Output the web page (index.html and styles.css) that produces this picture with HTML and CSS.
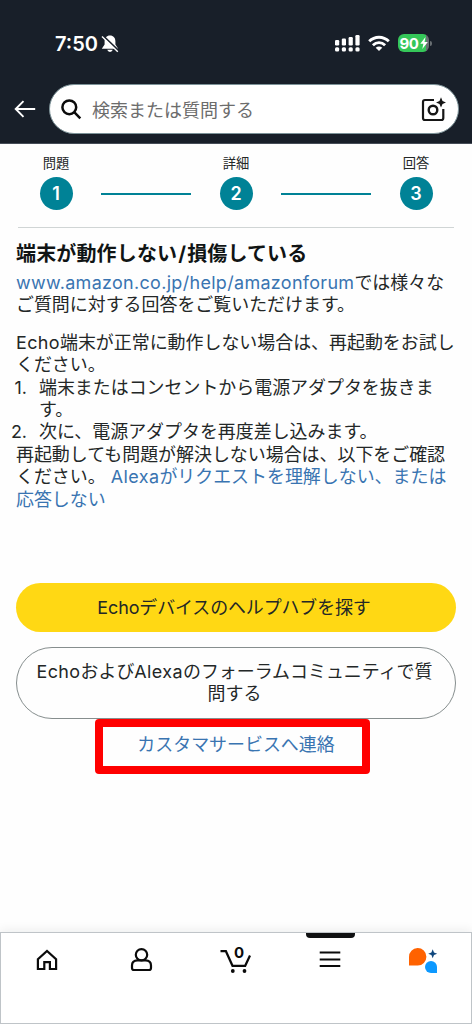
FILE: index.html
```html
<!DOCTYPE html>
<html lang="ja">
<head>
<meta charset="utf-8">
<title>カスタマーサービス</title>
<link rel="stylesheet" href="styles.css">
</head>
<body>
<div class="screen">
  <header class="header">
    <div class="status">
      <span class="time">7:50</span>
      <svg class="bell" width="18" height="18" viewBox="0 0 18 18"><path d="M9 .5C5.600 .5 3.600 3 3.600 6.500V9.500L.8 13.800H17.200L14.400 9.500V6.500C14.400 3 12.400 .5 9 .5ZM6.200 14.800A2.900 2.900 0 0 0 11.800 14.800Z" fill="#fff"/><path d="M2.200 .8L17.800 15.800" stroke="#181f29" stroke-width="1.700"/><path d="M1 1.500L16.800 16.800" stroke="#fff" stroke-width="1.400"/></svg>
      <svg class="signal" width="26" height="18" viewBox="0 0 26 18" fill="#fff"><rect x="1" y="6" width="4.200" height="5.500" rx="1.200"/><rect x="7.800" y="4.500" width="4.200" height="7" rx="1.200"/><rect x="14.600" y="3" width="4.200" height="8.500" rx="1.200"/><rect x="21.400" y="1" width="4.200" height="10.500" rx="1.200"/><rect x="1" y="13.300" width="4.200" height="4.200" rx="1.500"/><rect x="7.800" y="13.300" width="4.200" height="4.200" rx="1.500"/><rect x="14.600" y="13.300" width="4.200" height="4.200" rx="1.500"/><rect x="21.400" y="13.300" width="4.200" height="4.200" rx="1.500"/></svg>
      <svg class="wifi" width="22" height="17" viewBox="0 0 22 17" fill="none" stroke="#fff" stroke-width="2.900"><path d="M1.200 6.300C6.800 .8 15.200 .8 20.800 6.300"/><path d="M4.900 10.200C8.500 6.800 13.500 6.800 17.100 10.200"/><path d="M11 16L7.700 12.700C9.700 11 12.300 11 14.300 12.700Z" fill="#fff" stroke="none"/></svg>
      <span class="battery"><b>90</b><svg width="8" height="12" viewBox="0 0 8 12"><path d="M5.500 0L.3 6.800H3.400L2.300 12L7.800 5H4.500Z" fill="#fff"/></svg></span><i class="battery-tip"></i>
    </div>
    <div class="searchrow">
      <svg class="back" width="22" height="18" viewBox="0 0 22 18" fill="none" stroke="#fff" stroke-width="1.900"><path d="M21.200 9H1.500M9.500 1.200L1.700 9L9.500 16.800"/></svg>
      <div class="search">
        <svg class="magnifier" width="21" height="21" viewBox="0 0 21 21" fill="none" stroke="#0b0b0b" stroke-width="2.500"><circle cx="8.300" cy="8.300" r="6.900"/><path d="M13.200 13.200L19.300 19.300"/></svg>
        <span class="placeholder">検索または質問する</span>
        <svg class="camera" width="25" height="25" viewBox="0 0 25 25" fill="none" stroke="#161616" stroke-width="2.200"><path d="M13 3H4Q2 3 2 5V21Q2 23 4 23H20.300Q22.300 23 22.300 21V12"/><circle cx="12" cy="13" r="4.300" stroke-width="2.400"/><path d="M20 .3L21.500 3.900L25 5.400L21.500 6.900L20 10.500L18.500 6.900L15 5.400L18.500 3.900Z" fill="#161616" stroke="none"/></svg>
      </div>
    </div>
  </header>
  <main class="main">
    <div class="steps">
      <div class="step"><span class="step-label">問題</span><span class="step-dot">1</span></div>
      <i class="step-line"></i>
      <div class="step"><span class="step-label">詳細</span><span class="step-dot">2</span></div>
      <i class="step-line"></i>
      <div class="step"><span class="step-label">回答</span><span class="step-dot">3</span></div>
    </div>
    <h1 class="title">端末が動作しない<span class="slash">/</span>損傷している</h1>
    <p class="text"><a class="link"><span class="url">www.amazon.co.jp/help/amazonforum</span></a>では様々な<br>ご質問に対する回答をご覧いただけます。</p>
    <p class="text spaced"><span class="latin">Echo</span>端末が正常に動作しない場合は、再起動をお試し<br>ください。</p>
    <ol class="list">
      <li class="item"><span class="num">1.</span><span>端末またはコンセントから電源アダプタを抜きま<br>す。</span></li>
      <li class="item"><span class="num">2.</span><span>次に、電源アダプタを再度差し込みます。</span></li>
    </ol>
    <p class="text">再起動しても問題が解決しない場合は、以下をご確認<br>ください。 <a class="link"><span class="latin">Alexa</span>がリクエストを理解しない、または<br>応答しない</a></p>
    <div class="actions">
      <a class="button primary"><span>Echoデバイスのヘルプハブを探す</span></a>
      <a class="button secondary"><span><span class="latin">Echo</span>および<span class="latin">Alexa</span>のフォーラムコミュニティで質<br>問する</span></a>
      <a class="contact link">カスタマサービスへ連絡</a>
    </div>
  </main>
  <nav class="tabs">
    <a class="tab"><svg class="nudge" width="24" height="26" viewBox="0 0 24 26" fill="none" stroke="#0b0b0b" stroke-width="2.200"><path d="M2.900 22V12.300L12 3.900L21.100 12.300V22H14.900V15.200H9.300V22Z"/></svg></a>
    <a class="tab"><svg class="nudge" width="24" height="26" viewBox="0 0 24 26" fill="none" stroke="#0b0b0b" stroke-width="2.200"><circle cx="12.500" cy="7.800" r="5.700"/><path d="M8.500 13.400Q3 13.600 3 18.500V21Q3 23 5 23H20Q22 23 22 21V18.500Q22 13.600 16.500 13.400Z"/></svg></a>
    <a class="tab"><span class="cart"><svg width="34" height="28" viewBox="0 0 34 28" fill="none" stroke="#0b0b0b" stroke-width="2.200"><path d="M1.500 4.200H6.900L13.500 18.800H26.200L31 8.500"/><circle cx="13.800" cy="24" r="1.900" fill="#0b0b0b" stroke="none"/><circle cx="25.500" cy="24" r="1.900" fill="#0b0b0b" stroke="none"/></svg><b class="count">0</b></span></a>
    <a class="tab active"><svg width="24" height="26" viewBox="0 0 24 26" stroke="#0b0b0b" stroke-width="2.200"><path d="M1.700 5.500H22.300M1.700 12.500H22.300M1.700 19H22.300"/></svg></a>
    <a class="tab"><svg class="nudge" width="30" height="28" viewBox="0 0 30 28"><path d="M1 18.500V10A8.700 8.700 0 1 1 9.700 18.500Z" fill="#ff6200"/><path d="M29 26V20A6 6 0 1 0 23 26Z" fill="#0d99ff"/><path d="M24.700 2.300L26 5.600L29.200 6.700L26 7.900L24.700 11.200L23.400 7.900L20.200 6.700L23.400 5.600Z" fill="#0f467d"/></svg></a>
  </nav>
</div>
</body>
</html>
```
FILE: styles.css
```css
* { box-sizing: border-box; }
body { margin: 0; background: #fff; font-family: Inter, "Noto Sans CJK JP", sans-serif; color: #232727; }
.screen { width: 472px; height: 1024px; display: flex; flex-direction: column; overflow: hidden; background: #fefefe; }
svg { display: block; flex: none; }
.header { height: 144px; background: #181f29; border-bottom: 1px solid #454c57; flex: none; }
.status { display: flex; height: 84px; padding: 2px 39px 0 55px; align-items: center; color: #fff; }
.time { font-size: 20px; font-weight: 600; width: 46px; padding-top: 1px; }
.bell { margin-top: 1px; }
.signal { margin-left: 215px; }
.wifi { margin-left: 8px; }
.battery { margin-left: 8px; display: flex; align-items: center; justify-content: center; width: 31px; height: 18px; border-radius: 6px; background: linear-gradient(90deg, #35c759 90%, #686e72 90%); font-size: 15px; letter-spacing: -.4px; gap: 1px; }
.battery-tip { width: 2px; height: 5px; margin-left: 1px; border-radius: 0 2px 2px 0; background: #686e72; }
.searchrow { display: flex; align-items: center; padding-left: 14px; gap: 13px; }
.search { display: flex; align-items: center; width: 410px; height: 50px; border: 1px solid #7c9298; border-radius: 25px; background: #fff; padding: 0 12px 0 11px; }
.placeholder { margin-left: 10px; font-size: 18px; color: #6c6c6c; flex: 1; line-height: 26px; padding-top: 4px; }
.main { flex: 1; padding: 10px 0 0 16px; }
.steps { display: flex; height: 74px; margin: 0 18px 0 2px; border-bottom: 1px solid #d0d5d5; padding: 0 21px; justify-content: space-between; }
.step { display: flex; flex-direction: column; align-items: center; width: 34px; }
.step-label { font-size: 13.3px; line-height: 19px; height: 23px; white-space: nowrap; }
.step-dot { width: 33px; height: 33px; border-radius: 50%; background: #008296; color: #fff; font-size: 18px; font-weight: 600; line-height: 33px; text-align: center; }
.step-line { width: 90px; height: 2px; background: #008296; margin-top: 39px; }
.title { margin: 12px 0 0; font-size: 20px; line-height: 28px; font-weight: 700; color: #101414; white-space: nowrap; letter-spacing: .15px; }
.slash { padding: 0 1px; }
.text { margin: 4px 0 0; font-size: 17.950px; line-height: 22.400px; white-space: nowrap; }
.spaced { margin-top: 15px; }
.link { color: #3974b1; }
.url { letter-spacing: .33px; }
.latin { letter-spacing: .4px; }
.list { margin: 0; padding: 0; list-style: none; font-size: 17.950px; line-height: 22.400px; }
.item { display: flex; white-space: nowrap; margin-left: -6px; }
.num { width: 17px; margin-right: 12px; text-align: right; flex: none; }
.list + .text { margin-top: 0; }
.actions { display: flex; flex-direction: column; align-items: center; width: 440px; margin-top: 72px; font-size: 17.950px; line-height: 22.400px; }
.button { display: flex; align-items: center; justify-content: center; width: 440px; text-align: center; white-space: nowrap; }
.primary { height: 49px; border-radius: 25px; background: #ffd814; letter-spacing: -.1px; padding: 1px 4px 0 0; }
.secondary { height: 72px; border: 1px solid #868e8e; border-radius: 36px; margin-top: 15px; padding-right: 3px; }
.contact { width: 275px; height: 55px; border: 8px solid #f00; border-radius: 4px; margin-right: 8px; display: flex; align-items: center; justify-content: center; white-space: nowrap; padding: 0 0 2px 8px; }
.tabs { height: 92px; flex: none; display: flex; border: 1px solid #bfc4c8; padding: 14px 0 0; background: #fff; box-shadow: 0 -2px 10px rgba(0,30,30,.07); }
.tab { flex: 1; display: flex; justify-content: center; align-items: flex-start; position: relative; }
.nudge { margin-right: 2px; }
.active::before { content: ""; position: absolute; top: -14px; width: 49px; height: 5px; border-radius: 0 0 4px 4px; background: #101112; }
.cart { position: relative; }
.count { position: absolute; left: 15px; top: -3px; font-size: 15px; line-height: 18px; color: #0b0b0b; }
```
